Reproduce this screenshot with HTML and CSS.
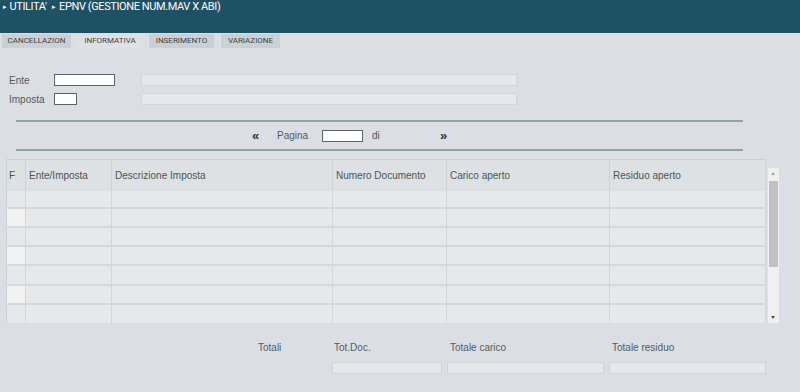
FILE: index.html
```html
<!DOCTYPE html>
<html>
<head>
<meta charset="utf-8">
<link rel="stylesheet" href="styles.css">
</head>
<body>
<header class="topbar">
  <span class="crumb"><span class="tri">&#9656;</span>UTILITA'</span>
  <span class="crumb"><span class="tri">&#9656;</span>EPNV (GESTIONE NUM.MAV X ABI)</span>
</header>
<nav class="tabs">
  <div class="tab t1">CANCELLAZION</div>
  <div class="tab t2 active">INFORMATIVA</div>
  <div class="tab t3">INSERIMENTO</div>
  <div class="tab t4">VARIAZIONE</div>
</nav>
<section class="form">
  <div class="frow">
    <label class="flabel">Ente</label>
    <div class="inp w-ente"></div>
    <div class="ro w-desc"></div>
  </div>
  <div class="frow">
    <label class="flabel">Imposta</label>
    <div class="inp w-imp"></div>
    <div class="ro w-desc"></div>
  </div>
</section>
<section class="pager">
  <span class="arrow prev">&laquo;</span>
  <span class="plabel pag">Pagina</span>
  <div class="inp w-page"></div>
  <span class="plabel di">di</span>
  <span class="arrow next">&raquo;</span>
</section>
<section class="grid-wrap">
  <table class="grid">
    <colgroup>
      <col class="c1"><col class="c2"><col class="c3"><col class="c4"><col class="c5"><col class="c6">
    </colgroup>
    <thead>
      <tr><th>F</th><th>Ente/Imposta</th><th>Descrizione Imposta</th><th>Numero Documento</th><th>Carico aperto</th><th>Residuo aperto</th></tr>
    </thead>
    <tbody>
      <tr><td></td><td></td><td></td><td></td><td></td><td></td></tr>
      <tr class="alt"><td></td><td></td><td></td><td></td><td></td><td></td></tr>
      <tr><td></td><td></td><td></td><td></td><td></td><td></td></tr>
      <tr class="alt"><td></td><td></td><td></td><td></td><td></td><td></td></tr>
      <tr><td></td><td></td><td></td><td></td><td></td><td></td></tr>
      <tr class="alt"><td></td><td></td><td></td><td></td><td></td><td></td></tr>
      <tr><td></td><td></td><td></td><td></td><td></td><td></td></tr>
    </tbody>
  </table>
  <div class="scroll">
    <div class="sbtn up"></div>
    <div class="thumb"></div>
    <div class="track"></div>
    <div class="sbtn down"></div>
  </div>
</section>
<section class="totals">
  <div class="tcol tlabel">Totali</div>
  <div class="tcol tdoc"><span>Tot.Doc.</span><div class="ro"></div></div>
  <div class="tcol tcar"><span>Totale carico</span><div class="ro"></div></div>
  <div class="tcol tres"><span>Totale residuo</span><div class="ro"></div></div>
</section>
</body>
</html>
```
FILE: styles.css
```css
* { box-sizing: border-box; }
html, body {
  margin: 0;
  padding: 0;
  width: 800px;
  height: 392px;
  overflow: hidden;
  background: #dbdfe3;
  font-family: "Liberation Sans", Arial, sans-serif;
  color: #555a5e;
  font-size: 10px;
}
.topbar {
  height: 33px;
  background: #1e5164;
  color: #fff;
  font-family: Roboto, "Liberation Sans", sans-serif;
  font-size: 11px;
  letter-spacing: -0.4px;
  padding: 0 0 0 3px;
  line-height: 13px;
  display: flex;
  gap: 6px;
}
.tri { font-size: 7px; margin-right: 3px; vertical-align: 1px; }
.tabs {
  display: flex;
  gap: 7px;
  padding-left: 2px;
  margin-top: 1px;
  height: 14px;
}
.tab {
  background: #c9d0d6;
  font-family: Roboto, "Liberation Sans", sans-serif;
  font-size: 8px;
  color: #3d4347;
  text-align: center;
  line-height: 14px;
}
.tab.active { background: #dde1e5; }
.t1 { width: 69px; }
.t2 { width: 64px; }
.t3 { width: 65px; }
.t4 { width: 59px; }

.form { padding: 26px 0 0 9px; }
.frow { display: flex; align-items: center; height: 12px; margin-bottom: 7px; }
.flabel { width: 45px; color: #555a5e; }
.inp { height: 12px; background: #fff; border: 1px solid #5f6469; }
.w-ente { width: 61px; margin-right: 26px; }
.w-imp { width: 23px; margin-right: 64px; }
.ro { height: 12px; background: #e6e9ec; border: 1px solid #d2d6da; }
.w-desc { width: 376px; }

.pager {
  margin: 15px 0 0 16px;
  width: 727px;
  height: 31px;
  border-top: 2px solid #8fa2ab;
  border-bottom: 2px solid #8fa2ab;
  display: flex;
  align-items: center;
}
.arrow { font-weight: bold; font-size: 13px; color: #2e3438; line-height: 12px; }
.prev { margin-left: 236px; width: 25px; }
.pag { width: 45px; }
.w-page { width: 41px; margin-right: 9px; }
.di { width: 68px; }

.grid-wrap {
  display: flex;
  margin: 8px 0 0 6px;
  height: 164px;
}
.grid {
  border-collapse: collapse;
  table-layout: fixed;
  width: 759px;
  border-left: 1px solid #cdd1d4;
  border-top: 1px solid #cdd1d4;
}
.c1 { width: 19px; }
.c2 { width: 86px; }
.c3 { width: 221px; }
.c4 { width: 114px; }
.c5 { width: 163px; }
.c6 { width: 156px; }
.grid th {
  height: 31px;
  padding: 0 0 0 3px;
  text-align: left;
  font-weight: normal;
  color: #4e5357;
  background: #dde1e4;
  border-right: 1px solid #cfd3d6;
  white-space: nowrap;
}
.grid th:first-child { padding-left: 2px; }
.grid td {
  height: 19px;
  background: #e6e9ec;
  border-right: 1px solid #d3d6d9;
  border-bottom: 2px solid #d6d9dc;
  padding: 0;
}
.grid tbody tr:first-child td { height: 17px; }
.grid tr.alt td:first-child { background: #f2f2f2; }
.grid tbody tr:last-child td { border-bottom: none; }

.scroll {
  margin: 9px 0 0 2px;
  width: 11px;
  height: 155px;
  background: #f0f0f0;
  display: flex;
  flex-direction: column;
  align-items: center;
}
.sbtn { height: 11px; width: 11px; position: relative; }
.sbtn.up::after, .sbtn.down::after {
  content: "";
  position: absolute;
  left: 3px;
  width: 0; height: 0;
  border-left: 2.5px solid transparent;
  border-right: 2.5px solid transparent;
}
.sbtn.up::after { top: 4px; border-bottom: 3px solid #a3a3a3; }
.sbtn.down::after { top: 4px; border-top: 3px solid #505050; }
.thumb { width: 9px; height: 86px; background: #c1c1c1; margin-top: 2px; }
.track { flex: 1; }

.totals {
  display: flex;
  margin-top: 19px;
  height: 40px;
}
.tcol { display: flex; flex-direction: column; gap: 8px; }
.tcol span { line-height: 12px; }
.tlabel { margin-left: 258px; width: 74px; line-height: 12px; }
.tdoc { width: 110px; margin-right: 5px; }
.tcar { width: 157px; margin-right: 5px; }
.tres { width: 157px; }
.tcol span { padding-left: 2px; }
.tcar span, .tres span { padding-left: 3px; }
.tcol .ro { height: 12px; width: 100%; }
```
